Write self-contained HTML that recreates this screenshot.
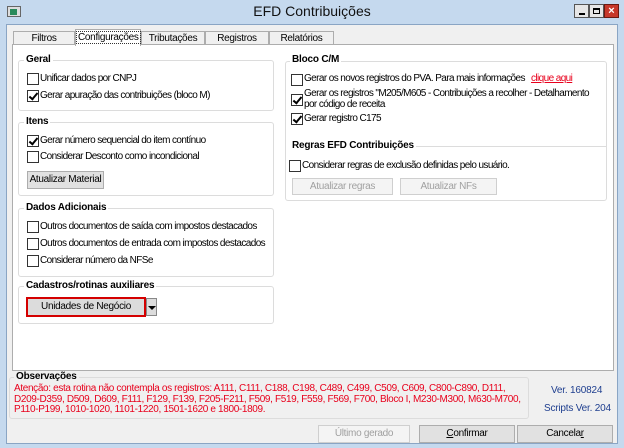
<!DOCTYPE html>
<html><head><meta charset="utf-8"><style>
*{box-sizing:border-box;margin:0;padding:0}
body{width:624px;height:448px;overflow:hidden;font-family:"Liberation Sans","DejaVu Sans",sans-serif;font-size:10px;letter-spacing:-0.6px;color:#000;background:#c5d9ee;position:relative}
.a{position:absolute;white-space:nowrap}
.win{position:absolute;left:6px;top:24px;width:612px;height:420px;background:#f0f0f0;border:1px solid #8aa5c4}
.title{left:0;top:3px;width:624px;text-align:center;font-size:14px;letter-spacing:0;color:#111}
.tab{position:absolute;top:31px;height:14px;background:#f0f0f0;border:1px solid #adadad;border-bottom:none;text-align:center;line-height:13px;font-size:10px;letter-spacing:-0.3px;white-space:nowrap}
.panel{position:absolute;left:12px;top:44px;width:602px;height:327px;background:#fff;border:1px solid #adadad}
.grp{position:absolute;border:1px solid #dcdcdc;border-radius:3px}
.gt{position:absolute;background:#fff;font-weight:bold;padding:0 2px;font-size:10px;letter-spacing:-0.2px;white-space:nowrap}
.cb{position:absolute;width:12px;height:12px;border:1px solid #333;background:#fff}
.ck::after{content:"";position:absolute;left:3px;top:0px;width:3px;height:7px;border:solid #000;border-width:0 2px 2px 0;transform:rotate(40deg)}
.btn{position:absolute;border:1px solid #adadad;background:#e1e1e1;text-align:center;font-size:10px;letter-spacing:-0.3px;white-space:nowrap}
.dis{color:#a0a0a0;background:#f4f4f4;border-color:#cfcfcf}
.red{color:#e8001c}
</style></head><body>
<div class="a" style="left:7px;top:6px;width:14px;height:11px;background:#ddd;border:1px solid #666"><div style="position:absolute;left:2px;top:2px;width:7px;height:6px;background:#2a8a5a"></div></div>
<div class="a title">EFD Contribuições</div>
<div class="a" style="left:574px;top:4px;width:15px;height:14px;background:#e6e6e6;border:1px solid #555"><div style="position:absolute;left:4px;top:8px;width:6px;height:2px;background:#000"></div></div>
<div class="a" style="left:589px;top:4px;width:15px;height:14px;background:#e6e6e6;border:1px solid #555"><div style="position:absolute;left:3px;top:3px;width:7px;height:6px;border:1px solid #000;border-top-width:2px"></div></div>
<div class="a" style="left:604px;top:4px;width:15px;height:14px;background:#c7382b;border:1px solid #6b1a12;color:#fff;font-weight:bold;font-size:11px;line-height:12px;text-align:center;letter-spacing:0">×</div>
<div class="win"></div>
<div class="tab" style="left:13px;width:62px">Filtros</div>
<div class="tab" style="left:141px;width:64px">Tributações</div>
<div class="tab" style="left:205px;width:64px">Registros</div>
<div class="tab" style="left:269px;width:65px">Relatórios</div>
<div class="panel"></div>
<div class="tab" style="left:75px;top:29px;height:17px;width:66px;background:#fff;z-index:2;line-height:15px"><span style="border:1px dotted #333;padding:0 1px">Configurações</span></div>

<div class="grp" style="left:18px;top:60px;width:256px;height:51px"></div>
<div class="gt" style="left:24px;top:54px">Geral</div>
<div class="cb" style="left:27px;top:73px"></div><div class="a" style="left:40px;top:73px">Unificar dados por CNPJ</div>
<div class="cb ck" style="left:27px;top:90px"></div><div class="a" style="left:40px;top:90px">Gerar apuração das contribuições (bloco M)</div>

<div class="grp" style="left:18px;top:122px;width:256px;height:74px"></div>
<div class="gt" style="left:24px;top:116px">Itens</div>
<div class="cb ck" style="left:27px;top:135px"></div><div class="a" style="left:40px;top:135px">Gerar número sequencial do item contínuo</div>
<div class="cb" style="left:27px;top:151px"></div><div class="a" style="left:40px;top:151px">Considerar Desconto como incondicional</div>
<div class="btn" style="left:27px;top:171px;width:77px;height:18px;line-height:16px">Atualizar Material</div>

<div class="grp" style="left:18px;top:208px;width:256px;height:69px"></div>
<div class="gt" style="left:24px;top:202px">Dados Adicionais</div>
<div class="cb" style="left:27px;top:221px"></div><div class="a" style="left:40px;top:221px">Outros documentos de saída com impostos destacados</div>
<div class="cb" style="left:27px;top:238px"></div><div class="a" style="left:40px;top:238px">Outros documentos de entrada com impostos destacados</div>
<div class="cb" style="left:27px;top:255px"></div><div class="a" style="left:40px;top:255px">Considerar número da NFSe</div>

<div class="grp" style="left:18px;top:286px;width:256px;height:38px"></div>
<div class="gt" style="left:24px;top:280px">Cadastros/rotinas auxiliares</div>
<div class="btn" style="left:26px;top:297px;width:120px;height:20px;line-height:16px;border:2px solid #d40000;background:#dcdcdc">Unidades de Negócio</div>
<div class="btn" style="left:146px;top:298px;width:11px;height:18px;background:#dcdcdc;border-color:#888"><div style="position:absolute;left:1px;top:7px;border:4px solid transparent;border-top:4px solid #000"></div></div>

<div class="grp" style="left:285px;top:61px;width:322px;height:140px"></div>
<div class="gt" style="left:290px;top:54px">Bloco C/M</div>
<div class="cb" style="left:291px;top:74px"></div><div class="a" style="left:304px;top:73px">Gerar os novos registros do PVA. Para mais informações <span class="red" style="text-decoration:underline;margin-left:4px">clique aqui</span></div>
<div class="cb ck" style="left:291px;top:94px"></div><div class="a" style="left:304px;top:88px;line-height:11px">Gerar os registros "M205/M605 - Contribuições a recolher - Detalhamento<br>por código de receita</div>
<div class="cb ck" style="left:291px;top:113px"></div><div class="a" style="left:304px;top:113px">Gerar registro C175</div>
<div class="a" style="left:380px;top:146px;width:226px;height:1px;background:#dcdcdc"></div>
<div class="gt" style="left:290px;top:140px">Regras EFD Contribuições</div>
<div class="cb" style="left:289px;top:160px"></div><div class="a" style="left:302px;top:160px">Considerar regras de exclusão definidas pelo usuário.</div>
<div class="btn dis" style="left:292px;top:178px;width:101px;height:17px;line-height:15px">Atualizar regras</div>
<div class="btn dis" style="left:400px;top:178px;width:97px;height:17px;line-height:15px">Atualizar NFs</div>

<div class="grp" style="left:9px;top:377px;width:520px;height:42px;background:#f0f0f0;border-color:#dcdcdc"></div>
<div class="gt" style="left:14px;top:371px;background:#f0f0f0">Observações</div>
<div class="a red" style="left:14px;top:384px;line-height:10.5px;font-size:10px;letter-spacing:-0.35px">Atenção: esta rotina não contempla os registros: A111, C111, C188, C198, C489, C499, C509, C609, C800-C890, D111,<br>D209-D359, D509, D609, F111, F129, F139, F205-F211, F509, F519, F559, F569, F700, Bloco I, M230-M300, M630-M700,<br>P110-P199, 1010-1020, 1101-1220, 1501-1620 e 1800-1809.</div>
<div class="a" style="left:551px;top:385px;color:#1f3f8f;font-size:10px;letter-spacing:-0.2px">Ver. 160824</div>
<div class="a" style="left:544px;top:403px;color:#1f3f8f;font-size:10px;letter-spacing:-0.2px">Scripts Ver. 204</div>

<div class="btn dis" style="left:318px;top:425px;width:92px;height:18px;line-height:16px">Último gerado</div>
<div class="btn" style="left:419px;top:425px;width:96px;height:18px;line-height:16px"><u>C</u>onfirmar</div>
<div class="btn" style="left:517px;top:425px;width:96px;height:18px;line-height:16px">Cancela<u>r</u></div>
</body></html>
